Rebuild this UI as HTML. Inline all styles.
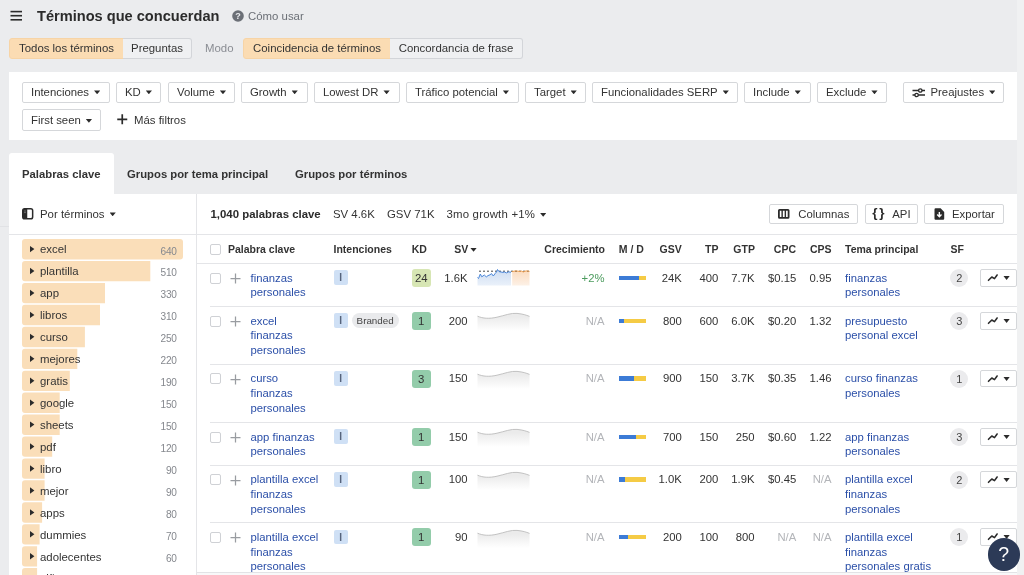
<!DOCTYPE html>
<html lang="es">
<head>
<meta charset="utf-8">
<title>Términos que concuerdan</title>
<style>
*{box-sizing:border-box;margin:0;padding:0}
html,body{width:1024px;height:575px;overflow:hidden}
body{background:#ebecee;font-family:"Liberation Sans",Arial,sans-serif;font-size:12px;color:#333;position:relative}
.abs{position:absolute}
.title{left:37px;top:7px;font-size:14.6px;font-weight:bold;color:#2b2b2b;line-height:18px;white-space:nowrap}
.how{left:248px;top:9px;font-size:11.4px;color:#6b6f76;line-height:14px;white-space:nowrap}
.seg{top:38px;height:21px;border:1px solid #d3d5d9;font-size:11.4px;line-height:19.9px;text-align:center;color:#333;white-space:nowrap;background:#eff0f2}
.seg.on{background:#fbdcb3;border-color:#f7d4a6}
.panel{background:#fff}
.fb{height:20.75px;border:1px solid #d5d7da;border-radius:2px;background:#fff;font-size:11.35px;line-height:19.75px;color:#333;white-space:nowrap;padding-left:8px}
.car{display:inline-block;width:6.2px;height:3.8px;background:#2b2b2b;clip-path:polygon(0 0,100% 0,50% 100%);vertical-align:middle;margin-left:5px;position:relative;top:-0.4px}
.tab{top:153px;height:40px;line-height:42px;font-size:11.3px;font-weight:bold;color:#333;white-space:nowrap}
.side-row{left:22px;height:21px;width:162px}
.side-row .bar{position:absolute;left:0;top:0;height:20.4px;background:#fadcb5;border-radius:2px}
.side-row .tri{position:absolute;left:8px;top:6.9px;width:0;height:0;border-top:3.2px solid transparent;border-bottom:3.2px solid transparent;border-left:4px solid #2b2b2b}
.side-row .lbl{position:absolute;left:18px;top:0.4px;line-height:21.6px;font-size:11.4px;color:#333}
.side-row .cnt{position:absolute;right:7.4px;top:0.5px;line-height:23px;font-size:10.1px;letter-spacing:-0.25px;color:#85888e}
.th{top:236px;height:27px;line-height:27px;font-size:10.5px;font-weight:bold;color:#333;white-space:nowrap}
.r{text-align:right}
.cell{font-size:11.3px;line-height:14.7px;color:#333;white-space:nowrap}
.lnk{color:#2b4fa8}
.na{color:#b3b5b9}
.chk{width:11px;height:11px;border:1px solid #cfd1d5;border-radius:2px;background:#fff}
.kd{width:19.5px;height:18px;border-radius:3px;text-align:center;line-height:18.5px;font-size:11.4px;color:#333;background:#8fcba6}
.int{width:14.25px;height:14.6px;border-radius:2px;background:#cfe0f5;color:#56647c;font-size:10px;font-weight:bold;line-height:15px;text-align:center}
.sf{width:18px;height:18px;border-radius:9px;background:#ebebed;text-align:center;line-height:18.5px;font-size:11px;color:#444}
.tb{width:36.75px;height:17.75px;border:1px solid #d5d7da;border-radius:2px;background:#fff}
.hl{height:1px;background:#e4e5e8}
.grn{color:#4b9b5d}
.brand{height:14.8px;border-radius:8px;background:#e9eaec;color:#444;font-size:9.8px;line-height:15px;padding:0 5.1px;white-space:nowrap}
</style>
</head>
<body>
<div id="app" style="position:absolute;left:0;top:0;width:1024px;height:575px;overflow:hidden;will-change:transform">
<!-- header -->
<svg class="abs" style="left:10px;top:10px" width="13" height="12" viewBox="0 0 13 12"><rect x="0.5" y="0.8" width="11.5" height="1.6" fill="#2b2b2b"/><rect x="0.5" y="4.9" width="11.5" height="1.6" fill="#2b2b2b"/><rect x="0.5" y="9" width="11.5" height="1.6" fill="#2b2b2b"/></svg>
<div class="abs title">Términos que concuerdan</div>
<svg class="abs" style="left:232px;top:10px" width="12" height="12" viewBox="0 0 12 12"><circle cx="6" cy="6" r="5.8" fill="#6b6f76"/><text x="6" y="9.3" font-size="9" font-weight="bold" text-anchor="middle" fill="#ebecef" font-family="Liberation Sans, sans-serif">?</text></svg>
<div class="abs how">Cómo usar</div>

<div class="abs seg on" style="left:9px;width:115px;border-radius:3px 0 0 3px">Todos los términos</div>
<div class="abs seg" style="left:123px;width:69px;border-radius:0 3px 3px 0;border-left:none">Preguntas</div>
<div class="abs" style="left:205px;top:38px;line-height:21px;font-size:11.4px;color:#8a8d93">Modo</div>
<div class="abs seg on" style="left:243px;width:148px;border-radius:3px 0 0 3px">Coincidencia de términos</div>
<div class="abs seg" style="left:390px;width:133px;border-radius:0 3px 3px 0;border-left:none">Concordancia de frase</div>

<!-- filters -->
<div class="abs panel" style="left:9px;top:72px;width:1007.75px;height:67.5px"></div>
<div class="abs fb" style="left:22px;top:81.75px;width:88px">Intenciones<span class="car"></span></div>
<div class="abs fb" style="left:116px;top:81.75px;width:45px">KD<span class="car"></span></div>
<div class="abs fb" style="left:168px;top:81.75px;width:67px">Volume<span class="car"></span></div>
<div class="abs fb" style="left:241px;top:81.75px;width:67px">Growth<span class="car"></span></div>
<div class="abs fb" style="left:314px;top:81.75px;width:86px">Lowest DR<span class="car"></span></div>
<div class="abs fb" style="left:406px;top:81.75px;width:113px">Tráfico potencial<span class="car"></span></div>
<div class="abs fb" style="left:525px;top:81.75px;width:61px">Target<span class="car"></span></div>
<div class="abs fb" style="left:592px;top:81.75px;width:146px">Funcionalidades SERP<span class="car"></span></div>
<div class="abs fb" style="left:744px;top:81.75px;width:67px">Include<span class="car"></span></div>
<div class="abs fb" style="left:817px;top:81.75px;width:70px">Exclude<span class="car"></span></div>
<div class="abs fb" style="left:903px;top:81.75px;width:100.5px;padding-left:26.5px">Preajustes<span class="car"></span></div>
<div class="abs fb" style="left:22px;top:109.25px;width:79px;height:21.25px;line-height:20.5px">First seen<span class="car"></span></div>
<div class="abs" style="left:134px;top:109.6px;line-height:21px;font-size:11.4px;color:#333">Más filtros</div>
<svg class="abs" style="left:116.5px;top:114.1px" width="11" height="11" viewBox="0 0 11 11"><path d="M5.25 0.3v10M0.25 5.3h10" stroke="#2b2b2b" stroke-width="1.7" fill="none"/></svg>
<svg class="abs" style="left:911.5px;top:86.5px" width="14" height="12" viewBox="0 0 14 12"><path d="M0.5 3.5h12.5M0.5 8h12.5" stroke="#2b2b2b" stroke-width="1.4" fill="none"/><circle cx="8.3" cy="3.5" r="1.7" fill="#fff" stroke="#2b2b2b" stroke-width="1.3"/><circle cx="4.6" cy="8" r="1.7" fill="#fff" stroke="#2b2b2b" stroke-width="1.3"/></svg>

<!-- tabs -->
<div class="abs panel" style="left:9px;top:153px;width:105px;height:41px;border-radius:3px 3px 0 0"></div>
<div class="abs tab" style="left:22px">Palabras clave</div>
<div class="abs tab" style="left:127px">Grupos por tema principal</div>
<div class="abs tab" style="left:295px">Grupos por términos</div>

<!-- main panel -->
<div class="abs panel" style="left:9px;top:193.6px;width:1008px;height:382px"></div>
<div class="abs" style="left:195.75px;top:193.6px;width:1px;height:382px;background:#e4e5e8"></div>
<div class="abs hl" style="left:9px;top:234.4px;width:1008px"></div>
<div class="abs hl" style="left:197px;top:262.75px;width:820px"></div>

<div class="abs" style="left:0;top:226.4px;width:9px;height:1px;background:#e1e2e5"></div>
<!-- sidebar head -->
<svg class="abs" style="left:22px;top:208.4px" width="12" height="12" viewBox="0 0 12 12"><rect x="0.75" y="0.75" width="9.9" height="10.1" rx="1.8" fill="#fff" stroke="#2b2b2b" stroke-width="1.5"/><path d="M0.75 2.5 a1.8 1.8 0 0 1 1.8 -1.8 h2.7 v10.2 h-2.7 a1.8 1.8 0 0 1 -1.8 -1.8 z" fill="#2b2b2b"/><path d="M2.2 3h1.6M2.2 4.6h1.6" stroke="#9a9a9a" stroke-width="0.7"/></svg>
<div class="abs" style="left:40px;top:203.8px;line-height:21px;font-size:11.4px;color:#333;white-space:nowrap">Por términos<span class="car"></span></div>

<!-- toolbar -->
<div class="abs" style="left:210.5px;top:204.2px;line-height:21px;font-size:11.4px;font-weight:bold;color:#2b2b2b;white-space:nowrap">1,040 palabras clave</div>
<div class="abs" style="left:333px;top:204.2px;line-height:21px;font-size:11.4px;color:#333;white-space:nowrap">SV 4.6K</div>
<div class="abs" style="left:387px;top:204.2px;line-height:21px;font-size:11.4px;color:#333;white-space:nowrap">GSV 71K</div>
<div class="abs" style="left:446.5px;top:204.2px;line-height:21px;font-size:11.4px;color:#333;white-space:nowrap;letter-spacing:0.2px">3mo growth +1%<span class="car"></span></div>
<div class="abs fb" style="left:769.25px;top:203.6px;width:88.5px;padding-left:28px">Columnas</div>
<div class="abs fb" style="left:864.75px;top:203.6px;width:52.75px;padding-left:26.5px">API</div>
<div class="abs fb" style="left:924px;top:203.6px;width:80px;padding-left:27px">Exportar</div>
<svg class="abs" style="left:777.5px;top:209.25px" width="12" height="10" viewBox="0 0 12 10"><rect x="0.9" y="0.9" width="9.7" height="8" rx="0.6" fill="none" stroke="#2b2b2b" stroke-width="1.8"/><path d="M4.15 1v8M7.35 1v8" stroke="#2b2b2b" stroke-width="1.4"/></svg>
<div class="abs" style="left:872.3px;top:202.4px;line-height:21px;font-size:13.5px;font-weight:bold;color:#2b2b2b;letter-spacing:1.6px">{}</div>
<svg class="abs" style="left:933.5px;top:208.3px" width="11" height="12" viewBox="0 0 11 12"><path d="M1.6 0.3 h5 l3.6 3.6 v6.8 a1.1 1.1 0 0 1 -1.1 1.1 h-7.5 a1.1 1.1 0 0 1 -1.1 -1.1 v-9.3 a1.1 1.1 0 0 1 1.1 -1.1 z" fill="#2b2b2b"/><path d="M5.35 4 v4.4 M3.2 6.6 l2.15 2.1 l2.15 -2.1" stroke="#fff" stroke-width="1.4" fill="none"/></svg>

<!-- table header -->
<div class="abs chk" style="left:210px;top:243.75px"></div>
<div class="abs th" style="left:228px">Palabra clave</div>
<div class="abs th" style="left:333.5px">Intenciones</div>
<div class="abs th" style="left:411.75px">KD</div>
<div class="abs th" style="left:454.25px">SV<span class="car" style="margin-left:2.2px"></span></div>
<div class="abs th r" style="left:505px;width:100px">Crecimiento</div>
<div class="abs th" style="left:618.75px">M / D</div>
<div class="abs th r" style="left:601.75px;width:80px">GSV</div>
<div class="abs th r" style="left:638.4px;width:80px">TP</div>
<div class="abs th r" style="left:674.9px;width:80px">GTP</div>
<div class="abs th r" style="left:716px;width:80px">CPC</div>
<div class="abs th r" style="left:751.5px;width:80px">CPS</div>
<div class="abs th" style="left:845px">Tema principal</div>
<div class="abs th" style="left:950.6px">SF</div>

<!--GEN-->
<svg class="abs" style="left:22px;top:239px" width="162" height="336" viewBox="0 0 162 336"><rect x="0" y="0.00" width="161.0" height="20.4" rx="3" fill="#fadeb9"/><path d="M8 6.90 L12.4 10.10 L8 13.30 z" fill="#2b2b2b"/><path d="M3 21.94 H128.3 V42.34 H3 a3 3 0 0 1 -3 -3 V24.94 a3 3 0 0 1 3 -3 z" fill="#fadeb9"/><path d="M8 28.84 L12.4 32.04 L8 35.24 z" fill="#2b2b2b"/><path d="M3 43.88 H83.0 V64.28 H3 a3 3 0 0 1 -3 -3 V46.88 a3 3 0 0 1 3 -3 z" fill="#fadeb9"/><path d="M8 50.78 L12.4 53.98 L8 57.18 z" fill="#2b2b2b"/><path d="M3 65.82 H78.0 V86.22 H3 a3 3 0 0 1 -3 -3 V68.82 a3 3 0 0 1 3 -3 z" fill="#fadeb9"/><path d="M8 72.72 L12.4 75.92 L8 79.12 z" fill="#2b2b2b"/><path d="M3 87.76 H62.9 V108.16 H3 a3 3 0 0 1 -3 -3 V90.76 a3 3 0 0 1 3 -3 z" fill="#fadeb9"/><path d="M8 94.66 L12.4 97.86 L8 101.06 z" fill="#2b2b2b"/><path d="M3 109.70 H55.3 V130.10 H3 a3 3 0 0 1 -3 -3 V112.70 a3 3 0 0 1 3 -3 z" fill="#fadeb9"/><path d="M8 116.60 L12.4 119.80 L8 123.00 z" fill="#2b2b2b"/><path d="M3 131.64 H47.8 V152.04 H3 a3 3 0 0 1 -3 -3 V134.64 a3 3 0 0 1 3 -3 z" fill="#fadeb9"/><path d="M8 138.54 L12.4 141.74 L8 144.94 z" fill="#2b2b2b"/><path d="M3 153.58 H37.7 V173.98 H3 a3 3 0 0 1 -3 -3 V156.58 a3 3 0 0 1 3 -3 z" fill="#fadeb9"/><path d="M8 160.48 L12.4 163.68 L8 166.88 z" fill="#2b2b2b"/><path d="M3 175.52 H37.7 V195.92 H3 a3 3 0 0 1 -3 -3 V178.52 a3 3 0 0 1 3 -3 z" fill="#fadeb9"/><path d="M8 182.42 L12.4 185.62 L8 188.82 z" fill="#2b2b2b"/><path d="M3 197.46 H30.2 V217.86 H3 a3 3 0 0 1 -3 -3 V200.46 a3 3 0 0 1 3 -3 z" fill="#fadeb9"/><path d="M8 204.36 L12.4 207.56 L8 210.76 z" fill="#2b2b2b"/><path d="M3 219.40 H22.6 V239.80 H3 a3 3 0 0 1 -3 -3 V222.40 a3 3 0 0 1 3 -3 z" fill="#fadeb9"/><path d="M8 226.30 L12.4 229.50 L8 232.70 z" fill="#2b2b2b"/><path d="M3 241.34 H22.6 V261.74 H3 a3 3 0 0 1 -3 -3 V244.34 a3 3 0 0 1 3 -3 z" fill="#fadeb9"/><path d="M8 248.24 L12.4 251.44 L8 254.64 z" fill="#2b2b2b"/><path d="M3 263.28 H20.1 V283.68 H3 a3 3 0 0 1 -3 -3 V266.28 a3 3 0 0 1 3 -3 z" fill="#fadeb9"/><path d="M8 270.18 L12.4 273.38 L8 276.58 z" fill="#2b2b2b"/><path d="M3 285.22 H17.6 V305.62 H3 a3 3 0 0 1 -3 -3 V288.22 a3 3 0 0 1 3 -3 z" fill="#fadeb9"/><path d="M8 292.12 L12.4 295.32 L8 298.52 z" fill="#2b2b2b"/><path d="M3 307.16 H15.1 V327.56 H3 a3 3 0 0 1 -3 -3 V310.16 a3 3 0 0 1 3 -3 z" fill="#fadeb9"/><path d="M8 314.06 L12.4 317.26 L8 320.46 z" fill="#2b2b2b"/><path d="M3 329.10 H15.1 V349.50 H3 a3 3 0 0 1 -3 -3 V332.10 a3 3 0 0 1 3 -3 z" fill="#fadeb9"/><path d="M8 336.00 L12.4 339.20 L8 342.40 z" fill="#2b2b2b"/></svg>
<div class="abs side-row" style="top:239.00px"><div class="lbl">excel</div><div class="cnt">640</div></div>
<div class="abs side-row" style="top:260.94px"><div class="lbl">plantilla</div><div class="cnt">510</div></div>
<div class="abs side-row" style="top:282.88px"><div class="lbl">app</div><div class="cnt">330</div></div>
<div class="abs side-row" style="top:304.82px"><div class="lbl">libros</div><div class="cnt">310</div></div>
<div class="abs side-row" style="top:326.76px"><div class="lbl">curso</div><div class="cnt">250</div></div>
<div class="abs side-row" style="top:348.70px"><div class="lbl">mejores</div><div class="cnt">220</div></div>
<div class="abs side-row" style="top:370.64px"><div class="lbl">gratis</div><div class="cnt">190</div></div>
<div class="abs side-row" style="top:392.58px"><div class="lbl">google</div><div class="cnt">150</div></div>
<div class="abs side-row" style="top:414.52px"><div class="lbl">sheets</div><div class="cnt">150</div></div>
<div class="abs side-row" style="top:436.46px"><div class="lbl">pdf</div><div class="cnt">120</div></div>
<div class="abs side-row" style="top:458.40px"><div class="lbl">libro</div><div class="cnt">90</div></div>
<div class="abs side-row" style="top:480.34px"><div class="lbl">mejor</div><div class="cnt">90</div></div>
<div class="abs side-row" style="top:502.28px"><div class="lbl">apps</div><div class="cnt">80</div></div>
<div class="abs side-row" style="top:524.22px"><div class="lbl">dummies</div><div class="cnt">70</div></div>
<div class="abs side-row" style="top:546.16px"><div class="lbl">adolecentes</div><div class="cnt">60</div></div>
<div class="abs side-row" style="top:568.10px"><div class="lbl">niños</div><div class="cnt">60</div></div>
<div class="abs chk" style="left:210px;top:272.50px"></div>
<svg class="abs" style="left:229.5px;top:272.75px" width="11" height="11" viewBox="0 0 11 11"><path d="M5.5 0.5v10M0.5 5.5h10" stroke="#999ca1" stroke-width="1.25" fill="none"/></svg>
<div class="abs cell lnk" style="left:250.5px;top:270.65px">finanzas<br>personales</div>
<div class="abs int" style="left:333.5px;top:270.45px">I</div>
<div class="abs kd" style="left:411.5px;top:268.75px;background:#d7e6b4">24</div>
<div class="abs cell r" style="left:387.5px;width:80px;top:270.50px">1.6K</div>
<svg class="abs" style="left:477px;top:267.25px" width="54" height="20" viewBox="0 0 54 20"><defs><linearGradient id="gb" x1="0" y1="0" x2="0" y2="1"><stop offset="0" stop-color="#cddcf1"/><stop offset="1" stop-color="#eaf1fa"/></linearGradient><linearGradient id="go" x1="0" y1="0" x2="0" y2="1"><stop offset="0" stop-color="#fbdcc0"/><stop offset="1" stop-color="#fdf1e6"/></linearGradient></defs><path d="M0.5 10.5 L1.5 11.5 L3.3 7 L4.8 9.8 L7.3 8 L9.3 9.9 L11 8.6 L13 7.8 L14.5 6.6 L16.3 9 L18.3 6.3 L19.5 5 L20.5 2.5 L22 4.6 L24 5 L26 5.4 L27.5 5 L29.5 5.9 L31.5 4.9 L34 5.2 L34 18.5 L0.5 18.5 Z" fill="url(#gb)"/><path d="M35.2 4.6 L37 4.2 L39 3.9 L41 4.2 L43 4.4 L44.5 4.1 L46.3 5 L48 4.2 L50 3.9 L52.5 4.4 L52.5 18.5 L35.2 18.5 Z" fill="url(#go)"/><path d="M2 4.2 H53" stroke="#333" stroke-width="0.9" stroke-dasharray="2 2" fill="none"/><path d="M0.5 10.5 L1.5 11.5 L3.3 7 L4.8 9.8 L7.3 8 L9.3 9.9 L11 8.6 L13 7.8 L14.5 6.6 L16.3 9 L18.3 6.3 L19.5 5 L20.5 2.5 L22 4.6 L24 5 L26 5.4 L27.5 5 L29.5 5.9 L31.5 4.9 L34 5.2" stroke="#4a86d9" stroke-width="1" fill="none" stroke-linejoin="round"/><path d="M35.2 4.6 L37 4.2 L39 3.9 L41 4.2 L43 4.4 L44.5 4.1 L46.3 5 L48 4.2 L50 3.9 L52.5 4.4" stroke="#f2a04e" stroke-width="1" fill="none" stroke-linejoin="round"/></svg>
<div class="abs cell grn r" style="left:524.5px;width:80px;top:270.50px">+2%</div>
<div class="abs" style="left:618.5px;top:275.50px;width:27px;height:4.5px;background:#f5cb45"><div style="width:20px;height:4.5px;background:#3c7bd6"></div></div>
<div class="abs cell r" style="left:601.75px;width:80px;top:270.50px">24K</div>
<div class="abs cell r" style="left:638.25px;width:80px;top:270.50px">400</div>
<div class="abs cell r" style="left:674.5px;width:80px;top:270.50px">7.7K</div>
<div class="abs cell r" style="left:716.25px;width:80px;top:270.50px">$0.15</div>
<div class="abs cell r" style="left:751.5px;width:80px;top:270.50px">0.95</div>
<div class="abs cell lnk" style="left:845px;top:270.65px">finanzas<br>personales</div>
<div class="abs sf" style="left:950.25px;top:268.75px">2</div>
<div class="abs tb" style="left:979.9px;top:268.85px"><svg style="position:absolute;left:6px;top:3.2px" width="24" height="10" viewBox="0 0 24 10"><path d="M1.5 7.3 L4.8 4.0 L7.5 5.6 L10.1 2.0" stroke="#2b2b2b" stroke-width="1.6" fill="none" stroke-linecap="round" stroke-linejoin="round"/><path d="M16.5 3.1 h6.2 l-3.1 3.9 z" fill="#2b2b2b"/></svg></div>
<div class="abs hl" style="left:210px;top:305.75px;width:807px"></div>
<div class="abs chk" style="left:210px;top:315.50px"></div>
<svg class="abs" style="left:229.5px;top:315.75px" width="11" height="11" viewBox="0 0 11 11"><path d="M5.5 0.5v10M0.5 5.5h10" stroke="#999ca1" stroke-width="1.25" fill="none"/></svg>
<div class="abs cell lnk" style="left:250.5px;top:313.65px">excel<br>finanzas<br>personales</div>
<div class="abs int" style="left:333.5px;top:313.45px">I</div>
<div class="abs brand" style="left:351.5px;top:313.25px">Branded</div>
<div class="abs kd" style="left:411.5px;top:311.75px;background:#93ccaa">1</div>
<div class="abs cell r" style="left:387.5px;width:80px;top:313.50px">200</div>
<svg class="abs" style="left:477px;top:310.25px" width="54" height="22" viewBox="0 0 54 22"><defs><linearGradient id="gg306" x1="0" y1="0" x2="0" y2="1"><stop offset="0.2" stop-color="#ebebeb"/><stop offset="1" stop-color="#ffffff"/></linearGradient></defs><path d="M0.5 6.2 C6 8.5 12 9 20 7.2 S34 2.8 40 3.4 S49 5 52.5 6.4 L52.5 21 L0.5 21 Z" fill="url(#gg306)"/><path d="M0.5 6.2 C6 8.5 12 9 20 7.2 S34 2.8 40 3.4 S49 5 52.5 6.4" stroke="#c2c2c2" stroke-width="1" fill="none"/></svg>
<div class="abs cell na r" style="left:524.5px;width:80px;top:313.50px">N/A</div>
<div class="abs" style="left:618.5px;top:318.50px;width:27px;height:4.5px;background:#f5cb45"><div style="width:5px;height:4.5px;background:#3c7bd6"></div></div>
<div class="abs cell r" style="left:601.75px;width:80px;top:313.50px">800</div>
<div class="abs cell r" style="left:638.25px;width:80px;top:313.50px">600</div>
<div class="abs cell r" style="left:674.5px;width:80px;top:313.50px">6.0K</div>
<div class="abs cell r" style="left:716.25px;width:80px;top:313.50px">$0.20</div>
<div class="abs cell r" style="left:751.5px;width:80px;top:313.50px">1.32</div>
<div class="abs cell lnk" style="left:845px;top:313.65px">presupuesto<br>personal excel</div>
<div class="abs sf" style="left:950.25px;top:311.75px">3</div>
<div class="abs tb" style="left:979.9px;top:311.85px"><svg style="position:absolute;left:6px;top:3.2px" width="24" height="10" viewBox="0 0 24 10"><path d="M1.5 7.3 L4.8 4.0 L7.5 5.6 L10.1 2.0" stroke="#2b2b2b" stroke-width="1.6" fill="none" stroke-linecap="round" stroke-linejoin="round"/><path d="M16.5 3.1 h6.2 l-3.1 3.9 z" fill="#2b2b2b"/></svg></div>
<div class="abs hl" style="left:210px;top:363.50px;width:807px"></div>
<div class="abs chk" style="left:210px;top:373.25px"></div>
<svg class="abs" style="left:229.5px;top:373.50px" width="11" height="11" viewBox="0 0 11 11"><path d="M5.5 0.5v10M0.5 5.5h10" stroke="#999ca1" stroke-width="1.25" fill="none"/></svg>
<div class="abs cell lnk" style="left:250.5px;top:371.40px">curso<br>finanzas<br>personales</div>
<div class="abs int" style="left:333.5px;top:371.20px">I</div>
<div class="abs kd" style="left:411.5px;top:369.50px;background:#93ccaa">3</div>
<div class="abs cell r" style="left:387.5px;width:80px;top:371.25px">150</div>
<svg class="abs" style="left:477px;top:368.00px" width="54" height="22" viewBox="0 0 54 22"><defs><linearGradient id="gg364" x1="0" y1="0" x2="0" y2="1"><stop offset="0.2" stop-color="#ebebeb"/><stop offset="1" stop-color="#ffffff"/></linearGradient></defs><path d="M0.5 6.2 C6 8.5 12 9 20 7.2 S34 2.8 40 3.4 S49 5 52.5 6.4 L52.5 21 L0.5 21 Z" fill="url(#gg364)"/><path d="M0.5 6.2 C6 8.5 12 9 20 7.2 S34 2.8 40 3.4 S49 5 52.5 6.4" stroke="#c2c2c2" stroke-width="1" fill="none"/></svg>
<div class="abs cell na r" style="left:524.5px;width:80px;top:371.25px">N/A</div>
<div class="abs" style="left:618.5px;top:376.25px;width:27px;height:4.5px;background:#f5cb45"><div style="width:15px;height:4.5px;background:#3c7bd6"></div></div>
<div class="abs cell r" style="left:601.75px;width:80px;top:371.25px">900</div>
<div class="abs cell r" style="left:638.25px;width:80px;top:371.25px">150</div>
<div class="abs cell r" style="left:674.5px;width:80px;top:371.25px">3.7K</div>
<div class="abs cell r" style="left:716.25px;width:80px;top:371.25px">$0.35</div>
<div class="abs cell r" style="left:751.5px;width:80px;top:371.25px">1.46</div>
<div class="abs cell lnk" style="left:845px;top:371.40px">curso finanzas<br>personales</div>
<div class="abs sf" style="left:950.25px;top:369.50px">1</div>
<div class="abs tb" style="left:979.9px;top:369.60px"><svg style="position:absolute;left:6px;top:3.2px" width="24" height="10" viewBox="0 0 24 10"><path d="M1.5 7.3 L4.8 4.0 L7.5 5.6 L10.1 2.0" stroke="#2b2b2b" stroke-width="1.6" fill="none" stroke-linecap="round" stroke-linejoin="round"/><path d="M16.5 3.1 h6.2 l-3.1 3.9 z" fill="#2b2b2b"/></svg></div>
<div class="abs hl" style="left:210px;top:421.75px;width:807px"></div>
<div class="abs chk" style="left:210px;top:431.50px"></div>
<svg class="abs" style="left:229.5px;top:431.75px" width="11" height="11" viewBox="0 0 11 11"><path d="M5.5 0.5v10M0.5 5.5h10" stroke="#999ca1" stroke-width="1.25" fill="none"/></svg>
<div class="abs cell lnk" style="left:250.5px;top:429.65px">app finanzas<br>personales</div>
<div class="abs int" style="left:333.5px;top:429.45px">I</div>
<div class="abs kd" style="left:411.5px;top:427.75px;background:#93ccaa">1</div>
<div class="abs cell r" style="left:387.5px;width:80px;top:429.50px">150</div>
<svg class="abs" style="left:477px;top:426.25px" width="54" height="22" viewBox="0 0 54 22"><defs><linearGradient id="gg422" x1="0" y1="0" x2="0" y2="1"><stop offset="0.2" stop-color="#ebebeb"/><stop offset="1" stop-color="#ffffff"/></linearGradient></defs><path d="M0.5 6.2 C6 8.5 12 9 20 7.2 S34 2.8 40 3.4 S49 5 52.5 6.4 L52.5 21 L0.5 21 Z" fill="url(#gg422)"/><path d="M0.5 6.2 C6 8.5 12 9 20 7.2 S34 2.8 40 3.4 S49 5 52.5 6.4" stroke="#c2c2c2" stroke-width="1" fill="none"/></svg>
<div class="abs cell na r" style="left:524.5px;width:80px;top:429.50px">N/A</div>
<div class="abs" style="left:618.5px;top:434.50px;width:27px;height:4.5px;background:#f5cb45"><div style="width:17px;height:4.5px;background:#3c7bd6"></div></div>
<div class="abs cell r" style="left:601.75px;width:80px;top:429.50px">700</div>
<div class="abs cell r" style="left:638.25px;width:80px;top:429.50px">150</div>
<div class="abs cell r" style="left:674.5px;width:80px;top:429.50px">250</div>
<div class="abs cell r" style="left:716.25px;width:80px;top:429.50px">$0.60</div>
<div class="abs cell r" style="left:751.5px;width:80px;top:429.50px">1.22</div>
<div class="abs cell lnk" style="left:845px;top:429.65px">app finanzas<br>personales</div>
<div class="abs sf" style="left:950.25px;top:427.75px">3</div>
<div class="abs tb" style="left:979.9px;top:427.85px"><svg style="position:absolute;left:6px;top:3.2px" width="24" height="10" viewBox="0 0 24 10"><path d="M1.5 7.3 L4.8 4.0 L7.5 5.6 L10.1 2.0" stroke="#2b2b2b" stroke-width="1.6" fill="none" stroke-linecap="round" stroke-linejoin="round"/><path d="M16.5 3.1 h6.2 l-3.1 3.9 z" fill="#2b2b2b"/></svg></div>
<div class="abs hl" style="left:210px;top:464.50px;width:807px"></div>
<div class="abs chk" style="left:210px;top:474.25px"></div>
<svg class="abs" style="left:229.5px;top:474.50px" width="11" height="11" viewBox="0 0 11 11"><path d="M5.5 0.5v10M0.5 5.5h10" stroke="#999ca1" stroke-width="1.25" fill="none"/></svg>
<div class="abs cell lnk" style="left:250.5px;top:472.40px">plantilla excel<br>finanzas<br>personales</div>
<div class="abs int" style="left:333.5px;top:472.20px">I</div>
<div class="abs kd" style="left:411.5px;top:470.50px;background:#93ccaa">1</div>
<div class="abs cell r" style="left:387.5px;width:80px;top:472.25px">100</div>
<svg class="abs" style="left:477px;top:469.00px" width="54" height="22" viewBox="0 0 54 22"><defs><linearGradient id="gg465" x1="0" y1="0" x2="0" y2="1"><stop offset="0.2" stop-color="#ebebeb"/><stop offset="1" stop-color="#ffffff"/></linearGradient></defs><path d="M0.5 6.2 C6 8.5 12 9 20 7.2 S34 2.8 40 3.4 S49 5 52.5 6.4 L52.5 21 L0.5 21 Z" fill="url(#gg465)"/><path d="M0.5 6.2 C6 8.5 12 9 20 7.2 S34 2.8 40 3.4 S49 5 52.5 6.4" stroke="#c2c2c2" stroke-width="1" fill="none"/></svg>
<div class="abs cell na r" style="left:524.5px;width:80px;top:472.25px">N/A</div>
<div class="abs" style="left:618.5px;top:477.25px;width:27px;height:4.5px;background:#f5cb45"><div style="width:6.5px;height:4.5px;background:#3c7bd6"></div></div>
<div class="abs cell r" style="left:601.75px;width:80px;top:472.25px">1.0K</div>
<div class="abs cell r" style="left:638.25px;width:80px;top:472.25px">200</div>
<div class="abs cell r" style="left:674.5px;width:80px;top:472.25px">1.9K</div>
<div class="abs cell r" style="left:716.25px;width:80px;top:472.25px">$0.45</div>
<div class="abs cell na r" style="left:751.5px;width:80px;top:472.25px">N/A</div>
<div class="abs cell lnk" style="left:845px;top:472.40px">plantilla excel<br>finanzas<br>personales</div>
<div class="abs sf" style="left:950.25px;top:470.50px">2</div>
<div class="abs tb" style="left:979.9px;top:470.60px"><svg style="position:absolute;left:6px;top:3.2px" width="24" height="10" viewBox="0 0 24 10"><path d="M1.5 7.3 L4.8 4.0 L7.5 5.6 L10.1 2.0" stroke="#2b2b2b" stroke-width="1.6" fill="none" stroke-linecap="round" stroke-linejoin="round"/><path d="M16.5 3.1 h6.2 l-3.1 3.9 z" fill="#2b2b2b"/></svg></div>
<div class="abs hl" style="left:210px;top:522.00px;width:807px"></div>
<div class="abs chk" style="left:210px;top:531.75px"></div>
<svg class="abs" style="left:229.5px;top:532.00px" width="11" height="11" viewBox="0 0 11 11"><path d="M5.5 0.5v10M0.5 5.5h10" stroke="#999ca1" stroke-width="1.25" fill="none"/></svg>
<div class="abs cell lnk" style="left:250.5px;top:529.90px">plantilla excel<br>finanzas<br>personales</div>
<div class="abs int" style="left:333.5px;top:529.70px">I</div>
<div class="abs kd" style="left:411.5px;top:528.00px;background:#93ccaa">1</div>
<div class="abs cell r" style="left:387.5px;width:80px;top:529.75px">90</div>
<svg class="abs" style="left:477px;top:526.50px" width="54" height="22" viewBox="0 0 54 22"><defs><linearGradient id="gg522" x1="0" y1="0" x2="0" y2="1"><stop offset="0.2" stop-color="#ebebeb"/><stop offset="1" stop-color="#ffffff"/></linearGradient></defs><path d="M0.5 6.2 C6 8.5 12 9 20 7.2 S34 2.8 40 3.4 S49 5 52.5 6.4 L52.5 21 L0.5 21 Z" fill="url(#gg522)"/><path d="M0.5 6.2 C6 8.5 12 9 20 7.2 S34 2.8 40 3.4 S49 5 52.5 6.4" stroke="#c2c2c2" stroke-width="1" fill="none"/></svg>
<div class="abs cell na r" style="left:524.5px;width:80px;top:529.75px">N/A</div>
<div class="abs" style="left:618.5px;top:534.75px;width:27px;height:4.5px;background:#f5cb45"><div style="width:9px;height:4.5px;background:#3c7bd6"></div></div>
<div class="abs cell r" style="left:601.75px;width:80px;top:529.75px">200</div>
<div class="abs cell r" style="left:638.25px;width:80px;top:529.75px">100</div>
<div class="abs cell r" style="left:674.5px;width:80px;top:529.75px">800</div>
<div class="abs cell na r" style="left:716.25px;width:80px;top:529.75px">N/A</div>
<div class="abs cell na r" style="left:751.5px;width:80px;top:529.75px">N/A</div>
<div class="abs cell lnk" style="left:845px;top:529.90px">plantilla excel<br>finanzas<br>personales gratis</div>
<div class="abs sf" style="left:950.25px;top:528.00px">1</div>
<div class="abs tb" style="left:979.9px;top:528.10px"><svg style="position:absolute;left:6px;top:3.2px" width="24" height="10" viewBox="0 0 24 10"><path d="M1.5 7.3 L4.8 4.0 L7.5 5.6 L10.1 2.0" stroke="#2b2b2b" stroke-width="1.6" fill="none" stroke-linecap="round" stroke-linejoin="round"/><path d="M16.5 3.1 h6.2 l-3.1 3.9 z" fill="#2b2b2b"/></svg></div>
<!--/GEN-->

<!-- bottom strip + right strip + help -->
<div class="abs" style="left:197px;top:572.4px;width:820px;height:3px;background:#f8f8f9;border-top:1px solid #e2e3e6"></div>
<div class="abs" style="left:1017px;top:0;width:7px;height:575px;background:#f0f1f2"></div>
<div class="abs" style="left:987.5px;top:538px;width:32.5px;height:32.5px;border-radius:50%;background:#2c3a57;color:#fff;font-size:19.5px;line-height:33px;text-align:center">?</div>

</div>
</body>
</html>
